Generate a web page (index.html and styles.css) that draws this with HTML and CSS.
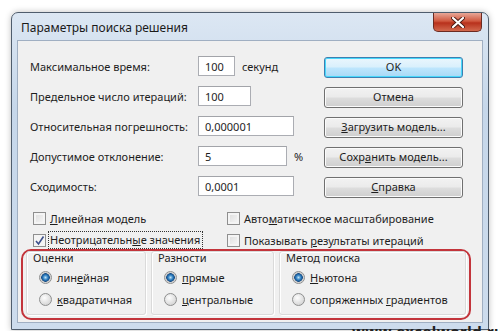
FILE: index.html
```html
<!DOCTYPE html>
<html lang="ru">
<head>
    <meta charset="UTF-8">
    <meta name="viewport" content="width=device-width, initial-scale=1.0">
    <title>Параметры поиска решения</title>
    <link rel="stylesheet" href="styles.css">
</head>
<body>

    <div class="window">
        <div class="titlebar">
            <span class="title">Параметры поиска решения</span>
            <div class="close">
                <svg width="14" height="11" viewBox="0 0 14 11">
                    <path d="M2 1 L12 10 M12 1 L2 10" stroke="#4a1a14" stroke-width="4" stroke-linecap="round"/>
                    <path d="M2 1 L12 10 M12 1 L2 10" stroke="#fff" stroke-width="2.2" stroke-linecap="round"/>
                </svg>
            </div>
        </div>

        <div class="content">
            <div class="top">
                <div class="fields">
                    <div class="field">
                        <span class="label">Максимальное время:</span>
                        <span class="input w-time">100</span>
                        <span class="unit">секунд</span>
                    </div>
                    <div class="field">
                        <span class="label">Предельное число итераций:</span>
                        <span class="input w-iter">100</span>
                    </div>
                    <div class="field">
                        <span class="label">Относительная погрешность:</span>
                        <span class="input w-long">0,000001</span>
                    </div>
                    <div class="field">
                        <span class="label">Допустимое отклонение:</span>
                        <span class="input w-dev">5</span>
                        <span class="unit">%</span>
                    </div>
                    <div class="field">
                        <span class="label">Сходимость:</span>
                        <span class="input w-long">0,0001</span>
                    </div>
                </div>

                <div class="buttons">
                    <div class="btn default">OK</div>
                    <div class="btn">Отмена</div>
                    <div class="btn"><u>З</u>агрузить модель...</div>
                    <div class="btn">Сохр<u>а</u>нить модель...</div>
                    <div class="btn"><u>С</u>правка</div>
                </div>
            </div>

            <div class="checks">
                <div class="check"><span class="box"></span><span><u>Л</u>инейная модель</span></div>
                <div class="check"><span class="box"></span><span>Авто<u>м</u>атическое масштабирование</span></div>
                <div class="check"><span class="box checked"><svg width="11" height="11" viewBox="0 0 11 11"><path d="M2 6 L4.5 9 L9.5 1.5" fill="none" stroke="#3c4f8a" stroke-width="1.6"/></svg></span><span class="focus">Неотрицательн<u>ы</u>е значения</span></div>
                <div class="check"><span class="box"></span><span>Показывать <u>р</u>езультаты итераций</span></div>
            </div>

            <div class="groups">
                <div class="group g-est">
                    <div class="group-title">Оценки</div>
                    <div class="radio"><span class="dot on"></span><span>лин<u>е</u>йная</span></div>
                    <div class="radio"><span class="dot"></span><span><u>к</u>вадратичная</span></div>
                </div>
                <div class="group g-diff">
                    <div class="group-title">Разности</div>
                    <div class="radio"><span class="dot on"></span><span><u>п</u>рямые</span></div>
                    <div class="radio"><span class="dot"></span><span><u>ц</u>ентральные</span></div>
                </div>
                <div class="group g-method">
                    <div class="group-title">Метод поиска</div>
                    <div class="radio"><span class="dot on"></span><span><u>Н</u>ьютона</span></div>
                    <div class="radio"><span class="dot"></span><span>сопряженных <u>г</u>радиентов</span></div>
                </div>
            </div>
        </div>
    </div>

    <div class="watermark">www.excelworld.ru</div>

</body>
</html>
```

FILE: styles.css
```css
* {
    box-sizing: border-box;
    margin: 0;
    padding: 0;
}

body {
    position: relative;
    height: 331px;
    overflow: hidden;
    background: #fff;
    font-family: "Noto Sans", sans-serif;
    font-size: 11px;
    color: #1e1e1e;
    white-space: nowrap;
}

u {
    text-decoration: underline;
    text-underline-offset: 1px;
}

/* Window frame */
.window {
    margin: 12px 0 0 11px;
    width: 478px;
    height: 318px;
    border: 1px solid #4f5d6d;
    border-radius: 7px 7px 0 0;
    background: linear-gradient(#dce7f3, #c6d7ea 30%, #cddced);
    padding: 0 5px 6px 5px;
    box-shadow: 0 0 6px rgba(0, 0, 0, 0.25);
    display: flex;
    flex-direction: column;
}

.titlebar {
    height: 27px;
    display: flex;
    align-items: flex-start;
    justify-content: space-between;
}

.title {
    font-size: 12px;
    padding: 6px 0 0 4px;
    color: #1a1a1a;
}

.close {
    width: 49px;
    height: 19px;
    margin-right: 1px;
    border: 1px solid #6b2b22;
    border-top: none;
    border-radius: 0 0 5px 5px;
    background: linear-gradient(#e8a797, #d0583f 45%, #b8311c 55%, #d2694e);
    display: flex;
    align-items: center;
    justify-content: center;
}

.content {
    flex: 1;
    background: #f0f0f0;
    border: 1px solid #a0afc2;
    padding-top: 15px;
}

/* Parameters */
.top {
    display: flex;
    padding-left: 12px;
}

.fields {
    width: 294px;
    display: flex;
    flex-direction: column;
    gap: 10px;
}

.field {
    display: flex;
    align-items: center;
    height: 20px;
}

.label {
    width: 168px;
}

.input {
    height: 20px;
    border: 1px solid #abadb3;
    border-top-color: #a2a4a9;
    background: #fff;
    padding: 1px 0 0 6px;
    line-height: 17px;
}

.w-time { width: 37px; }
.w-iter { width: 53px; }
.w-long { width: 96px; }
.w-dev { width: 89px; }

.unit {
    margin-left: 7px;
}

.buttons {
    width: 139px;
    margin-top: 1px;
    display: flex;
    flex-direction: column;
    gap: 9px;
}

.btn {
    height: 21px;
    border: 1px solid #707070;
    border-radius: 3px;
    background: linear-gradient(#f2f2f2, #ebebeb 48%, #dddddd 52%, #cfcfcf);
    box-shadow: inset 0 0 0 1px #fbfbfb;
    text-align: center;
    line-height: 18px;
}

.btn.default {
    border-color: #3c7fb1;
    box-shadow: inset 0 0 0 1px #48d8fb;
    background: linear-gradient(#eaf6fd, #d9f0fc 48%, #bee6fd 52%, #a7d9f5);
}

/* Checkboxes */
.checks {
    display: grid;
    grid-template-columns: 194px 1fr;
    padding-left: 15px;
    margin-top: 9px;
}

.check {
    height: 22px;
    display: flex;
    align-items: center;
}

.box {
    width: 13px;
    height: 13px;
    margin-right: 4px;
    border: 1px solid #8f8f8f;
    background: linear-gradient(135deg, #dcdcdc, #f8f8f8);
    box-shadow: inset 0 0 0 2px #f4f4f4;
    display: flex;
    align-items: center;
    justify-content: center;
}

.box.checked {
    background: #f4f4f4;
}

.focus {
    outline: 1px dotted #333;
    padding: 0 2px 1px 1px;
    margin-left: -1px;
}

/* Option groups */
.groups {
    margin: -2px 0 0 3px;
    width: 450px;
    height: 71px;
    border: 2px solid #c3343b;
    border-radius: 10px;
    display: flex;
    gap: 5px;
    padding: 0 3px 3px 3px;
}

.group {
    border: 1px solid #dadada;
    border-radius: 3px;
    box-shadow: 1px 1px 0 #fff, inset 1px 1px 0 #fff;
    padding: 0 0 0 12px;
}

.g-est { width: 120px; }
.g-diff { width: 123px; }
.g-method { flex: 1; }

.group-title {
    margin: -2px 0 0 -6px;
    line-height: 16px;
    height: 16px;
}

.radio {
    height: 22px;
    display: flex;
    align-items: center;
}

.dot {
    width: 13px;
    height: 13px;
    margin-right: 5px;
    border-radius: 50%;
    border: 1px solid #8e8f8f;
    background: radial-gradient(circle at 40% 35%, #fdfdfd, #d9d9d9 70%, #c8c8c8);
}

.dot.on {
    background: radial-gradient(circle, #bfe3f6 0, #2a7cc0 2.5px, #1a4f86 4px, #c4c4c4 4.5px, #efefef 6px);
}

.watermark {
    position: absolute;
    left: 352px;
    top: 321px;
    font-size: 15px;
    font-weight: bold;
    color: #222;
    letter-spacing: 0.5px;
}
```
